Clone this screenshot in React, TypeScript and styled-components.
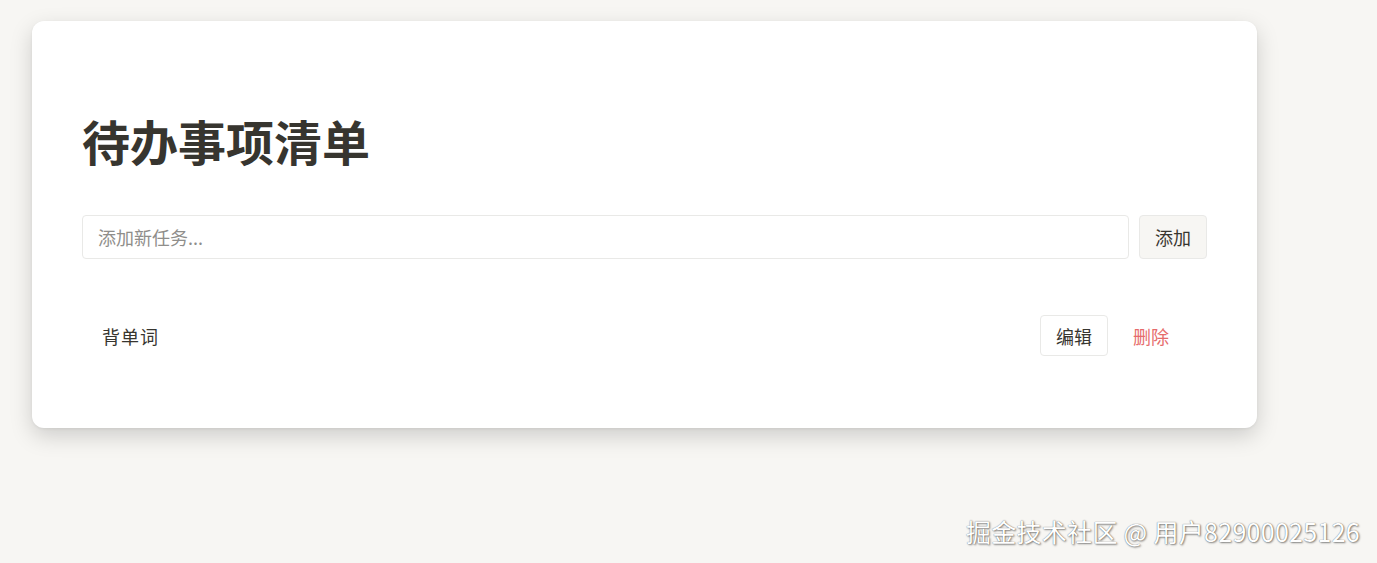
import React, { useState } from "react";
import styled, { createGlobalStyle } from "styled-components";

const GlobalStyle = createGlobalStyle`
  html, body { margin: 0; padding: 0; }
  body {
    background: #f7f6f3;
    font-family: "Noto Sans CJK SC", "Noto Sans", sans-serif;
    color: #37352f;
    min-height: 563px;
  }
  * { box-sizing: border-box; }
`;

const Page = styled.div`
  position: relative;
  min-height: 563px;
  padding: 21px 120px 0 32px;
`;

const Card = styled.div`
  width: 1225px;
  background: #ffffff;
  border-radius: 12px;
  box-shadow: 0 8px 22px rgba(0, 0, 0, 0.17), 0 1px 3px rgba(0, 0, 0, 0.06);
  padding: 50px 50px 52px;
`;

const Title = styled.h1`
  margin: 41px 0 46px;
  font-size: 48px;
  line-height: 57px;
  font-weight: 700;
  color: #37352f;
`;

const Form = styled.form`
  display: flex;
  gap: 10px;
  margin-bottom: 36px;
`;

const Input = styled.input`
  flex: 1;
  height: 44px;
  border: 1px solid #e9e9e7;
  border-radius: 4px;
  padding: 0 15px;
  font-family: inherit;
  font-size: 18px;
  color: #37352f;
  outline: none;
  &::placeholder { color: #8f8e8b; }
`;

const Button = styled.button<{ $variant?: "primary" | "ghost" | "outline" }>`
  height: ${(p) => (p.$variant === "primary" ? "44px" : "41px")};
  padding: 0 15px;
  border-radius: 4px;
  font-family: inherit;
  font-size: 18px;
  cursor: pointer;
  border: 1px solid ${(p) => (p.$variant === "ghost" ? "transparent" : "#e9e9e7")};
  background: ${(p) => (p.$variant === "primary" ? "#f7f6f3" : "transparent")};
  color: ${(p) => (p.$variant === "ghost" ? "#e66b6b" : "#37352f")};
`;

const List = styled.ul`
  list-style: none;
  margin: 0;
  padding: 0;
`;

const Item = styled.li`
  display: flex;
  align-items: center;
  justify-content: space-between;
  padding: 20px 22px 20px 20px;
  font-size: 18px;
`;

const TaskText = styled.span`
  letter-spacing: 1px;
`;

const Actions = styled.div`
  display: flex;
  gap: 9px;
`;

const Watermark = styled.div`
  position: absolute;
  right: 17px;
  bottom: 14px;
  font-size: 25px;
  letter-spacing: 0.3px;
  color: #ffffff;
  text-shadow: 0 0 1px rgba(0,0,0,0.6), 1px 1px 2px rgba(0, 0, 0, 0.45);
  font-family: "Noto Sans CJK SC", "Noto Sans", sans-serif;
`;

export default function App() {
  const [tasks] = useState(["背单词"]);
  return (
    <>
      <GlobalStyle />
      <Page>
        <Card>
          <Title>待办事项清单</Title>
          <Form onSubmit={(e) => e.preventDefault()}>
            <Input placeholder="添加新任务..." />
            <Button $variant="primary" type="submit">添加</Button>
          </Form>
          <List>
            {tasks.map((t) => (
              <Item key={t}>
                <TaskText>{t}</TaskText>
                <Actions>
                  <Button $variant="outline">编辑</Button>
                  <Button $variant="ghost">删除</Button>
                </Actions>
              </Item>
            ))}
          </List>
        </Card>
        <Watermark>掘金技术社区 @ 用户82900025126</Watermark>
      </Page>
    </>
  );
}
